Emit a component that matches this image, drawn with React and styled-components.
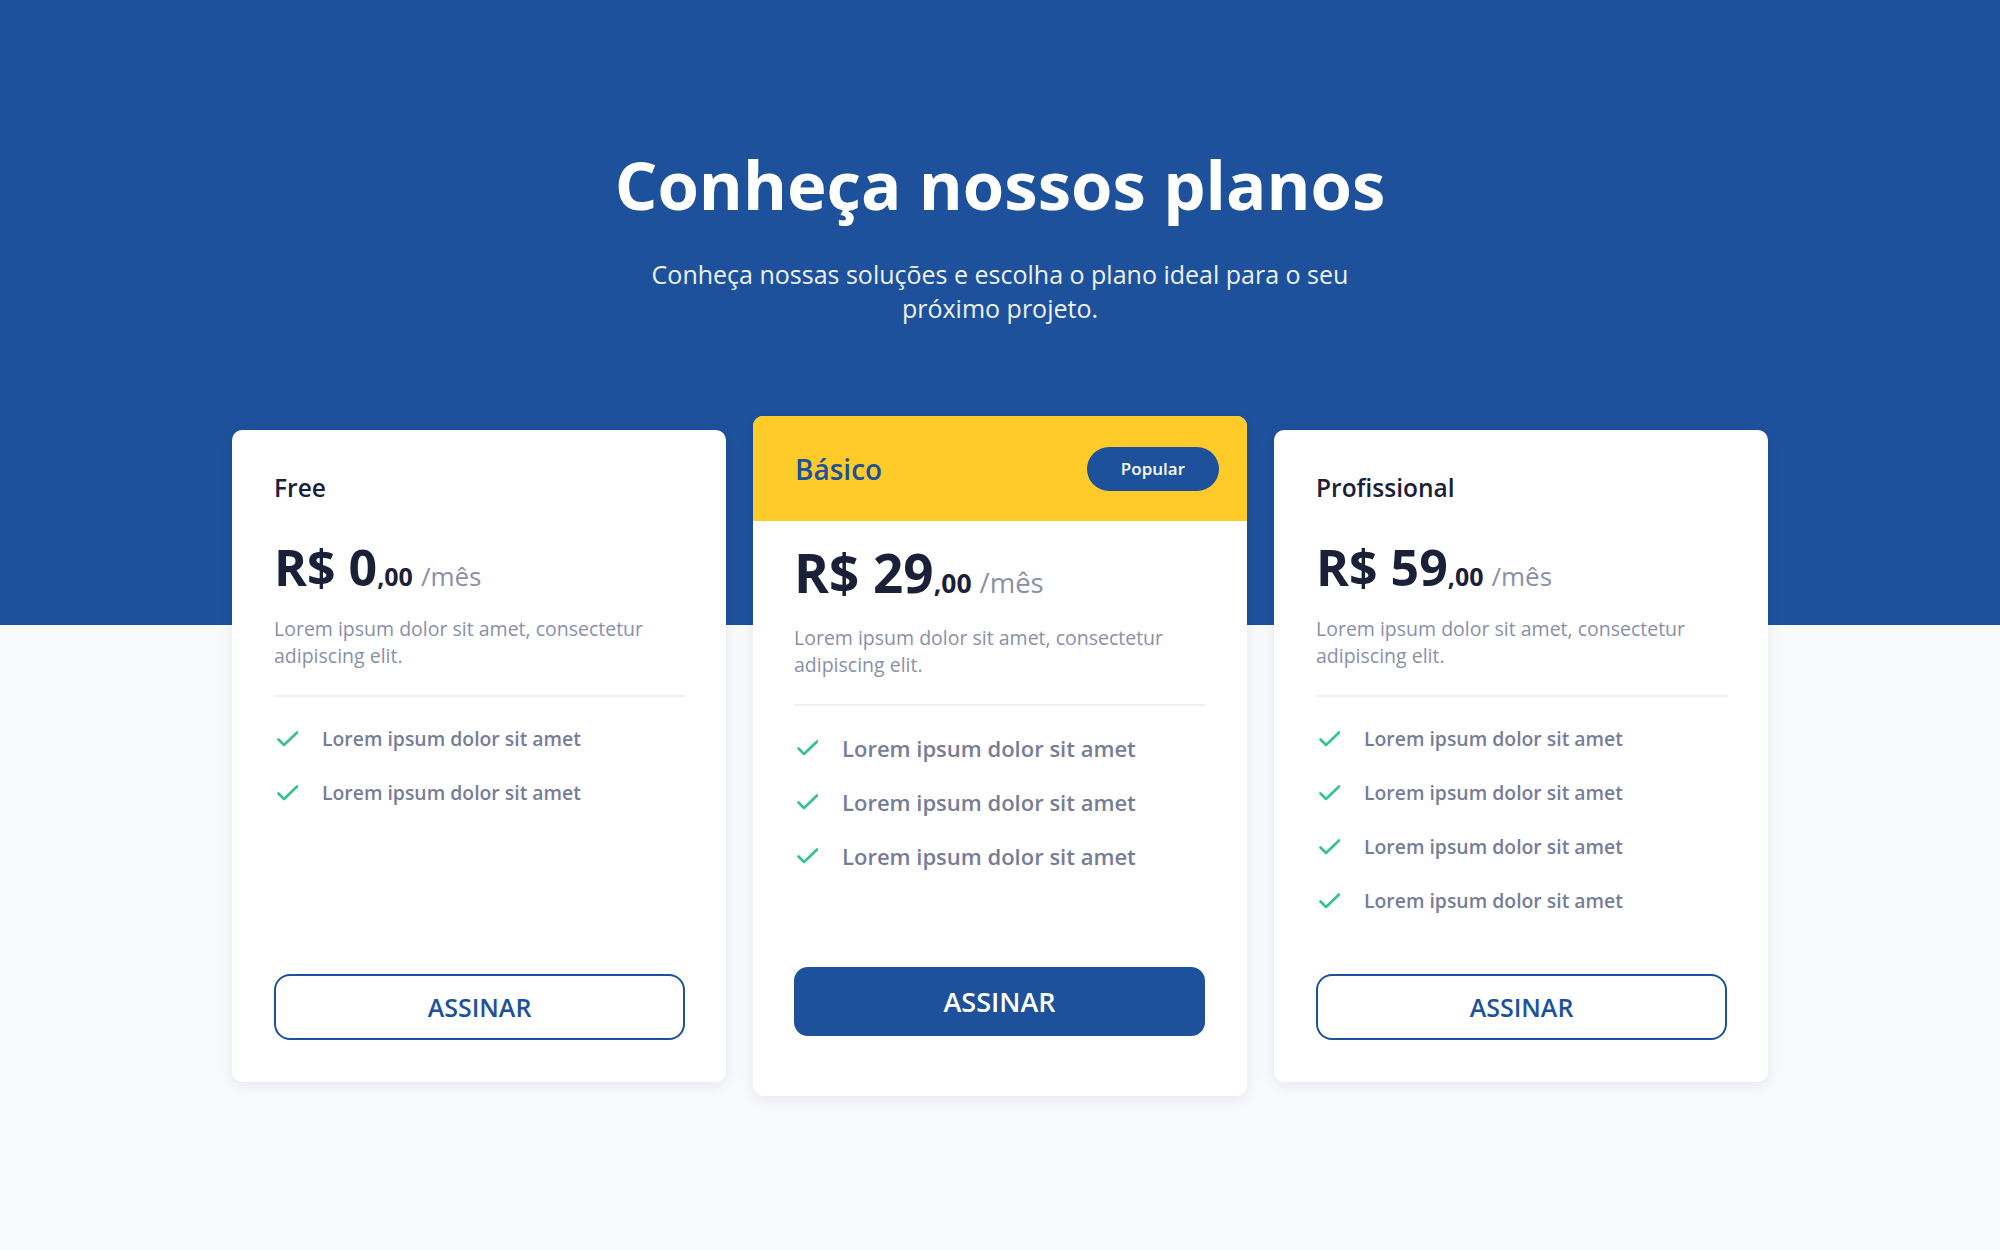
import React from "react";
import styled, { createGlobalStyle } from "styled-components";

const GlobalStyle = createGlobalStyle`
  * { box-sizing: border-box; }
  body {
    margin: 0;
    font-family: "Open Sans", "Noto Sans", sans-serif;
    background: #f8f9fb;
  }
`;

const blue = "#1d519c";

const plans = [
  { name: "Free", price: "0", features: 2 },
  { name: "Básico", price: "29", features: 3, featured: true },
  { name: "Profissional", price: "59", features: 4 },
];

function Check() {
  return (
    <svg width="24" height="18" viewBox="0 0 24 18" fill="none">
      <path
        d="M4.5 9.5L10 15L23 2.5"
        stroke="#35c38c"
        strokeWidth="2.6"
        strokeLinecap="round"
        strokeLinejoin="round"
      />
    </svg>
  );
}

export default function App() {
  return (
    <>
      <GlobalStyle />
      <Page>
        <Title>Conheça nossos planos</Title>
        <Subtitle>
          Conheça nossas soluções e escolha o plano ideal para o seu próximo projeto.
        </Subtitle>

        <Cards>
          {plans.map((plan) => (
            <Card key={plan.name} $featured={plan.featured}>
              {plan.featured ? (
                <FeaturedHead>
                  <FeaturedName>{plan.name}</FeaturedName>
                  <Badge>Popular</Badge>
                </FeaturedHead>
              ) : (
                <PlanName>{plan.name}</PlanName>
              )}

              <Body $featured={plan.featured}>
                <Price $featured={plan.featured}>
                  R$ {plan.price}
                  <Cents>,00</Cents>
                  <Period>/mês</Period>
                </Price>
                <Description>
                  Lorem ipsum dolor sit amet, consectetur adipiscing elit.
                </Description>
                <Divider />
                <Features>
                  {Array.from({ length: plan.features }).map((_, i) => (
                    <Feature key={i} $featured={plan.featured}>
                      <Check />
                      Lorem ipsum dolor sit amet
                    </Feature>
                  ))}
                </Features>
                <Button $featured={plan.featured}>ASSINAR</Button>
              </Body>
            </Card>
          ))}
        </Cards>
      </Page>
    </>
  );
}

const Page = styled.main`
  min-height: 100vh;
  padding-top: 144px;
  display: flex;
  flex-direction: column;
  align-items: center;
  background: linear-gradient(to bottom, ${blue} 0, ${blue} 625px, #f8f9fb 625px);
`;

const Title = styled.h1`
  margin: 0;
  color: #fff;
  font-size: 67px;
  line-height: 80px;
  font-weight: 700;
`;

const Subtitle = styled.p`
  margin: 33px 0 0;
  max-width: 740px;
  text-align: center;
  color: #eef2f8;
  font-size: 25px;
  line-height: 34px;
`;

const Cards = styled.section`
  margin-top: 91px;
  display: flex;
  align-items: center;
  gap: 27px;
`;

const Card = styled.article`
  width: 494px;
  height: ${(p) => (p.$featured ? "680px" : "652px")};
  background: #fff;
  border-radius: 10px;
  overflow: hidden;
  box-shadow: 0 4px 14px rgba(25, 35, 70, 0.07);
  display: flex;
  flex-direction: column;
  padding: ${(p) => (p.$featured ? "0" : "42px 41px 42px 42px")};
`;

const PlanName = styled.h2`
  margin: 0;
  color: #1b2039;
  font-size: 24.5px;
  line-height: 32px;
  font-weight: 600;
`;

const FeaturedHead = styled.header`
  height: 105px;
  flex-shrink: 0;
  background: #ffcb29;
  display: flex;
  align-items: center;
  justify-content: space-between;
  padding: 0 28px 0 42px;
`;

const FeaturedName = styled.h2`
  margin: 0;
  color: ${blue};
  font-size: 28px;
  line-height: 36px;
  font-weight: 600;
`;

const Badge = styled.span`
  height: 44px;
  padding: 0 34px;
  border-radius: 22px;
  background: ${blue};
  color: #fff;
  font-size: 17px;
  font-weight: 600;
  display: flex;
  align-items: center;
`;

const Body = styled.div`
  flex: 1;
  display: flex;
  flex-direction: column;
  padding: ${(p) => (p.$featured ? "20px 42px 60px 41px" : "33px 0 0")};
`;

const Price = styled.div`
  color: #1b2039;
  font-weight: 700;
  font-size: ${(p) => (p.$featured ? "53px" : "50px")};
  line-height: ${(p) => (p.$featured ? "64px" : "60px")};
  white-space: nowrap;
`;

const Cents = styled.span`
  font-size: 0.5em;
`;

const Period = styled.span`
  margin-left: 8px;
  font-size: 0.52em;
  font-weight: 400;
  color: #8a90a6;
`;

const Description = styled.p`
  margin: 9px 0 0;
  color: #8a90a6;
  font-size: 19.5px;
  line-height: 27px;
`;

const Divider = styled.hr`
  margin: 26px 0 0;
  border: 0;
  height: 2px;
  background: #eef0f4;
`;

const Features = styled.ul`
  list-style: none;
  margin: 0;
  padding: 27px 0 0;
  display: flex;
  flex-direction: column;
  gap: 24px;
`;

const Feature = styled.li`
  display: flex;
  align-items: center;
  gap: 24px;
  color: #777d96;
  font-weight: 600;
  font-size: ${(p) => (p.$featured ? "22px" : "19.4px")};
  line-height: 30px;
`;

const Button = styled.button`
  margin-top: auto;
  width: 100%;
  height: ${(p) => (p.$featured ? "69px" : "66px")};
  border: 2px solid ${blue};
  border-radius: ${(p) => (p.$featured ? "14px" : "16px")};
  background: ${(p) => (p.$featured ? blue : "#fff")};
  color: ${(p) => (p.$featured ? "#fff" : blue)};
  font-family: inherit;
  font-size: ${(p) => (p.$featured ? "27px" : "25px")};
  font-weight: 600;
  cursor: pointer;
`;
